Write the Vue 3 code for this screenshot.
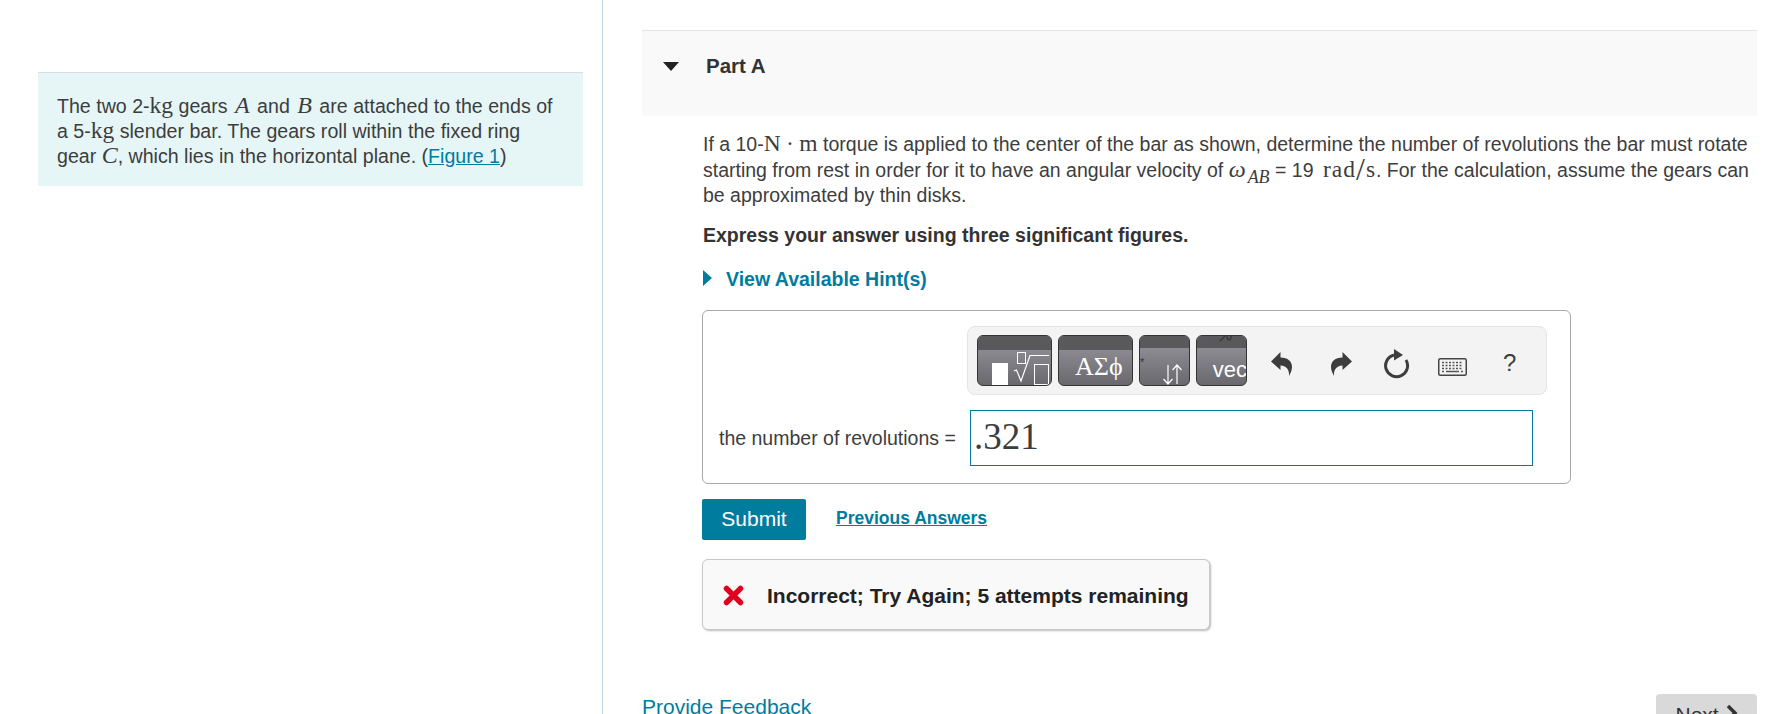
<template>
  <div class="page">
    <!-- left intro -->
    <aside class="left">
      <div class="intro">
        The two 2-<span class="rm">kg</span> gears <i class="mi gap">A</i> and <i class="mi gap">B</i> are attached to the ends of<br>
        a 5-<span class="rm">kg</span> slender bar. The gears roll within the fixed ring<br>
        gear <i class="mi">C</i>, which lies in the horizontal plane. (<a class="link">Figure 1</a>)
      </div>
    </aside>

    <main class="right">
      <header class="part-head">
        <span class="tri-down"></span>
        <span class="part-title">Part A</span>
      </header>

      <section class="part-body">
        <p class="prompt">
          If a 10-<span class="rm">N</span> <span class="rm">·</span> <span class="rm">m</span> torque is applied to the center of the bar as shown, determine the number of revolutions the bar must rotate<br>
          starting from rest in order for it to have an angular velocity of <i class="mi">ω<sub>AB</sub></i> = 19 <span class="rm rad">rad<span class="slash">/</span>s</span>. For the calculation, assume the gears can<br>
          be approximated by thin disks.
        </p>
        <p class="express">Express your answer using three significant figures.</p>
        <div class="hint"><span class="tri-right"></span>View Available Hint(s)</div>

        <div class="answer-box">
          <div class="palette">
            <div class="tool t1">
              <span class="tool-top"></span>
              <span class="white-block"></span>
              <svg class="root-ico" width="75" height="51" viewBox="0 0 75 51">
                <rect x="40.500" y="17.500" width="8" height="11" fill="none" stroke="#fff" stroke-width="1" />
                <path d="M37 36l2.500-1 4.500 11 9-25.500h19" fill="none" stroke="#fff" stroke-width="1.200" />
                <rect x="57.500" y="29.500" width="14" height="20" fill="none" stroke="#fff" stroke-width="1" />
              </svg>
            </div>
            <div class="tool t2">
              <span class="tool-top"></span>
              <span class="greek">ΑΣϕ</span>
            </div>
            <div class="tool t3">
              <span class="tool-top short"></span>
              <span class="star">*</span>
              <svg class="arrows" width="21" height="22" viewBox="0 0 21 22">
                <path d="M6 2v19M1.500 16L6 21l4.500-5M15 21V2M10.500 7L15 2l4.500 5" fill="none" stroke="#fff" stroke-width="1.200" />
              </svg>
            </div>
            <div class="tool t4">
              <span class="tool-top short"></span>
              <svg class="xn" width="14" height="6" viewBox="0 0 14 6">
                <path d="M1 5l5-5M8 0c0 3 1 4 2 4s2-1 2-4" fill="none" stroke="#333" stroke-width="1.200" />
              </svg>
              <span class="vec">vec</span>
            </div>

            <svg class="act undo" width="21" height="24" viewBox="0 0 21 24">
              <path d="M0 9.500L9.500 0v5.500C17 5.500 21 9.500 21 15c0 4-2 7-3 9 .5-6-2-10-8.500-10.500V18z" fill="#3d3d3d" />
            </svg>
            <svg class="act redo" width="21" height="24" viewBox="0 0 21 24">
              <path d="M21 9.500L11.500 0v5.500C4 5.500 0 9.500 0 15c0 4 2 7 3 9-.5-6 2-10 8.500-10.500V18z" fill="#3d3d3d" />
            </svg>
            <svg class="act reload" width="26" height="30" viewBox="0 0 26 30">
              <path d="M22 11A11 11 0 1 1 10 6" fill="none" stroke="#3d3d3d" stroke-width="3" />
              <path d="M10 0l9 6-9 5.500z" fill="#3d3d3d" />
            </svg>
            <svg class="act kbd" width="29" height="18" viewBox="0 0 29 18">
              <rect x="0.750" y="0.750" width="27.500" height="16.500" rx="1.500" fill="#f4f4f4" stroke="#444" stroke-width="1.500" />
              <path d="M4 4.500h21M4 7.500h21M4 10.500h21" stroke="#555" stroke-width="1.500" stroke-dasharray="2 1.500" fill="none" />
              <path d="M8 13.500h13M4 13.500h2M23 13.500h2" stroke="#555" stroke-width="1.500" fill="none" />
            </svg>
            <span class="help">?</span>
          </div>

          <div class="answer-row">
            <label>the number of revolutions =</label>
            <div class="input">.321</div>
          </div>
        </div>

        <div class="actions">
          <button class="submit">Submit</button>
          <a class="prev">Previous Answers</a>
        </div>

        <div class="feedback">
          <svg width="21" height="21" viewBox="0 0 21 21">
            <path d="M3.500 3.500l14 14M17.500 3.500l-14 14" fill="none" stroke="#e2001f" stroke-width="5.500" stroke-linecap="round" />
          </svg>
          <span>Incorrect; Try Again; 5 attempts remaining</span>
        </div>
      </section>

      <footer class="foot">
        <a class="provide">Provide Feedback</a>
        <div class="next">Next
          <svg width="13" height="18" viewBox="0 0 13 18"><path d="M3 2l7 7-7 7" fill="none" stroke="#333" stroke-width="3.500" /></svg>
        </div>
      </footer>
    </main>
  </div>
</template>

<script setup>
</script>

<style>
html, body { overflow: hidden; background: #fff; }
</style>

<style scoped>
.page { display: flex; width: 1774px; height: 714px; overflow: hidden;
  font-family: "Liberation Sans", Arial, sans-serif; font-size: 19.5px; color: #3d3d3d; }

/* left */
.left { width: 602px; flex: none; box-sizing: content-box; border-right: 1px solid #c3d4e2; padding-top: 72px; }
.intro { margin-left: 38px; width: 545px; box-sizing: border-box; padding: 21px 0 17px 19px; font-size: 19.6px;
  background: #e6f6f6; border-top: 1px solid #d5dfe3; line-height: 25px; white-space: nowrap; }
.rm { font-family: "Liberation Serif", serif; font-size: 23.5px; line-height: 0; }
.mi { font-family: "Liberation Serif", serif; font-size: 24px; font-style: italic; line-height: 0; }
.mi.gap { margin: 0 2px; }
.mi sub { font-size: 18px; line-height: 0; vertical-align: -6px; margin-left: 2px; }
.rad { margin-left: 4px; letter-spacing: 1px; }
.slash { font-size: 32px; font-weight: normal; vertical-align: -3px; line-height: 0; }
.link { color: #007c9e; text-decoration: underline; }

/* right */
.right { flex: 1; padding: 30px 17px 0 39px; min-width: 0; }
.part-head { height: 86px; background: #f9f9f9; border-top: 1px solid #e5e5e5; box-sizing: border-box;
  display: flex; align-items: flex-start; padding: 25px 0 0 21px; }
.tri-down { width: 0; height: 0; margin-top: 6px; border-left: 8px solid transparent; border-right: 8px solid transparent;
  border-top: 9px solid #222; }
.part-title { margin-left: 27px; font-size: 20.5px; font-weight: bold; color: #333; line-height: 20px; }

.part-body { padding: 16px 0 0 60px; }
.prompt { margin: 0 0 0 1px; line-height: 25.5px; white-space: nowrap; }
.express { margin: 14px 0 0 1px; font-weight: bold; color: #333; line-height: 25px; }
.hint { margin-top: 19px; display: flex; align-items: center; font-weight: bold; color: #007c9e; line-height: 25px; }
.tri-right { width: 0; height: 0; margin-left: 1px; border-top: 8px solid transparent; border-bottom: 8px solid transparent;
  border-left: 9px solid #007c9e; margin-right: 14px; margin-top: -2px; }

.answer-box { margin-top: 18px; width: 869px; height: 174px; box-sizing: border-box;
  border: 1px solid #a8a8a8; border-radius: 6px; padding: 15px 23px 0 16px; display: flex; flex-direction: column; }
.palette { align-self: flex-end; width: 580px; height: 69px; box-sizing: border-box; background: #f3f3f3;
  border: 1px solid #e4e4e4; border-radius: 8px; display: flex; align-items: center; padding: 0 0 0 9px; gap: 6px; }
.tool { position: relative; height: 51px; flex: none; box-sizing: border-box; overflow: hidden;
  border: 1px solid #333; border-radius: 6px; background: linear-gradient(#98979f, #69686d); color: #fff; }
.t1, .t2 { width: 75px; }
.t3, .t4 { width: 51px; }
.tool-top { position: absolute; left: 0; right: 0; top: 0; height: 14px; background: #59585b; }
.tool-top.short { height: 12px; }
.white-block { position: absolute; left: 14px; bottom: 0; width: 16px; height: 22px; background: #fff; }
.root-ico { position: absolute; left: -1px; top: -1px; }
.greek { position: absolute; left: 16px; bottom: 3px; font: 26px/30px "Liberation Serif", serif; }
.star { position: absolute; left: 0; top: 20px; font-size: 11px; line-height: 12px; color: #333; }
.arrows { position: absolute; left: 22px; bottom: 0; }
.xn { position: absolute; left: 22px; top: 0; }
.vec { position: absolute; right: -1px; bottom: 2px; font-size: 22px; line-height: 26px; }
.act { flex: none; margin-top: 7px; }
.undo { margin-left: 18px; }
.redo { margin-left: 33px; }
.reload { margin-left: 26px; }
.kbd { margin-left: 22px; margin-top: 13px; }
.help { margin-left: 30px; margin-top: 6px; font-size: 24px; color: #3d3d3d; }

.answer-row { margin-top: 15px; display: flex; align-items: center; }
.answer-row label { flex: none; width: 238px; margin-top: 2px; }
.input { width: 563px; height: 56px; margin-left: 13px; box-sizing: border-box; border: 1px solid #007c9e; padding-left: 3px;
  font: 37px/51px "Liberation Serif", serif; }

.actions { margin-top: 15px; display: flex; align-items: flex-start; }
.submit { width: 104px; height: 41px; background: #007c9e; color: #fff; border: none; border-radius: 2px;
  font: 21px "Liberation Sans", sans-serif; padding: 0; }
.prev { margin-left: 30px; margin-top: 8px; font-size: 17.5px; font-weight: bold; color: #007c9e; text-decoration: underline; line-height: 22px; }

.feedback { margin-top: 19px; width: 508px; height: 71px; box-sizing: border-box; background: #f9f9f9;
  border: 1px solid #c8c8c8; border-radius: 6px; box-shadow: 1px 1px 2px #bbb;
  display: flex; align-items: center; padding: 3px 0 0 20px; font-size: 21px; font-weight: bold; color: #222; }
.feedback span { margin-left: 23px; }

.foot { display: flex; justify-content: space-between; align-items: flex-start; margin-top: 63px; }
.provide { color: #007c9e; font-size: 21px; line-height: 24px; margin-top: 2px; }
.next { width: 101px; height: 40px; margin-top: 1px; background: #d9d9d9; border-radius: 4px; text-align: center;
  font-size: 21px; line-height: 38px; padding-top: 2px; box-sizing: border-box; color: #333; }
</style>
